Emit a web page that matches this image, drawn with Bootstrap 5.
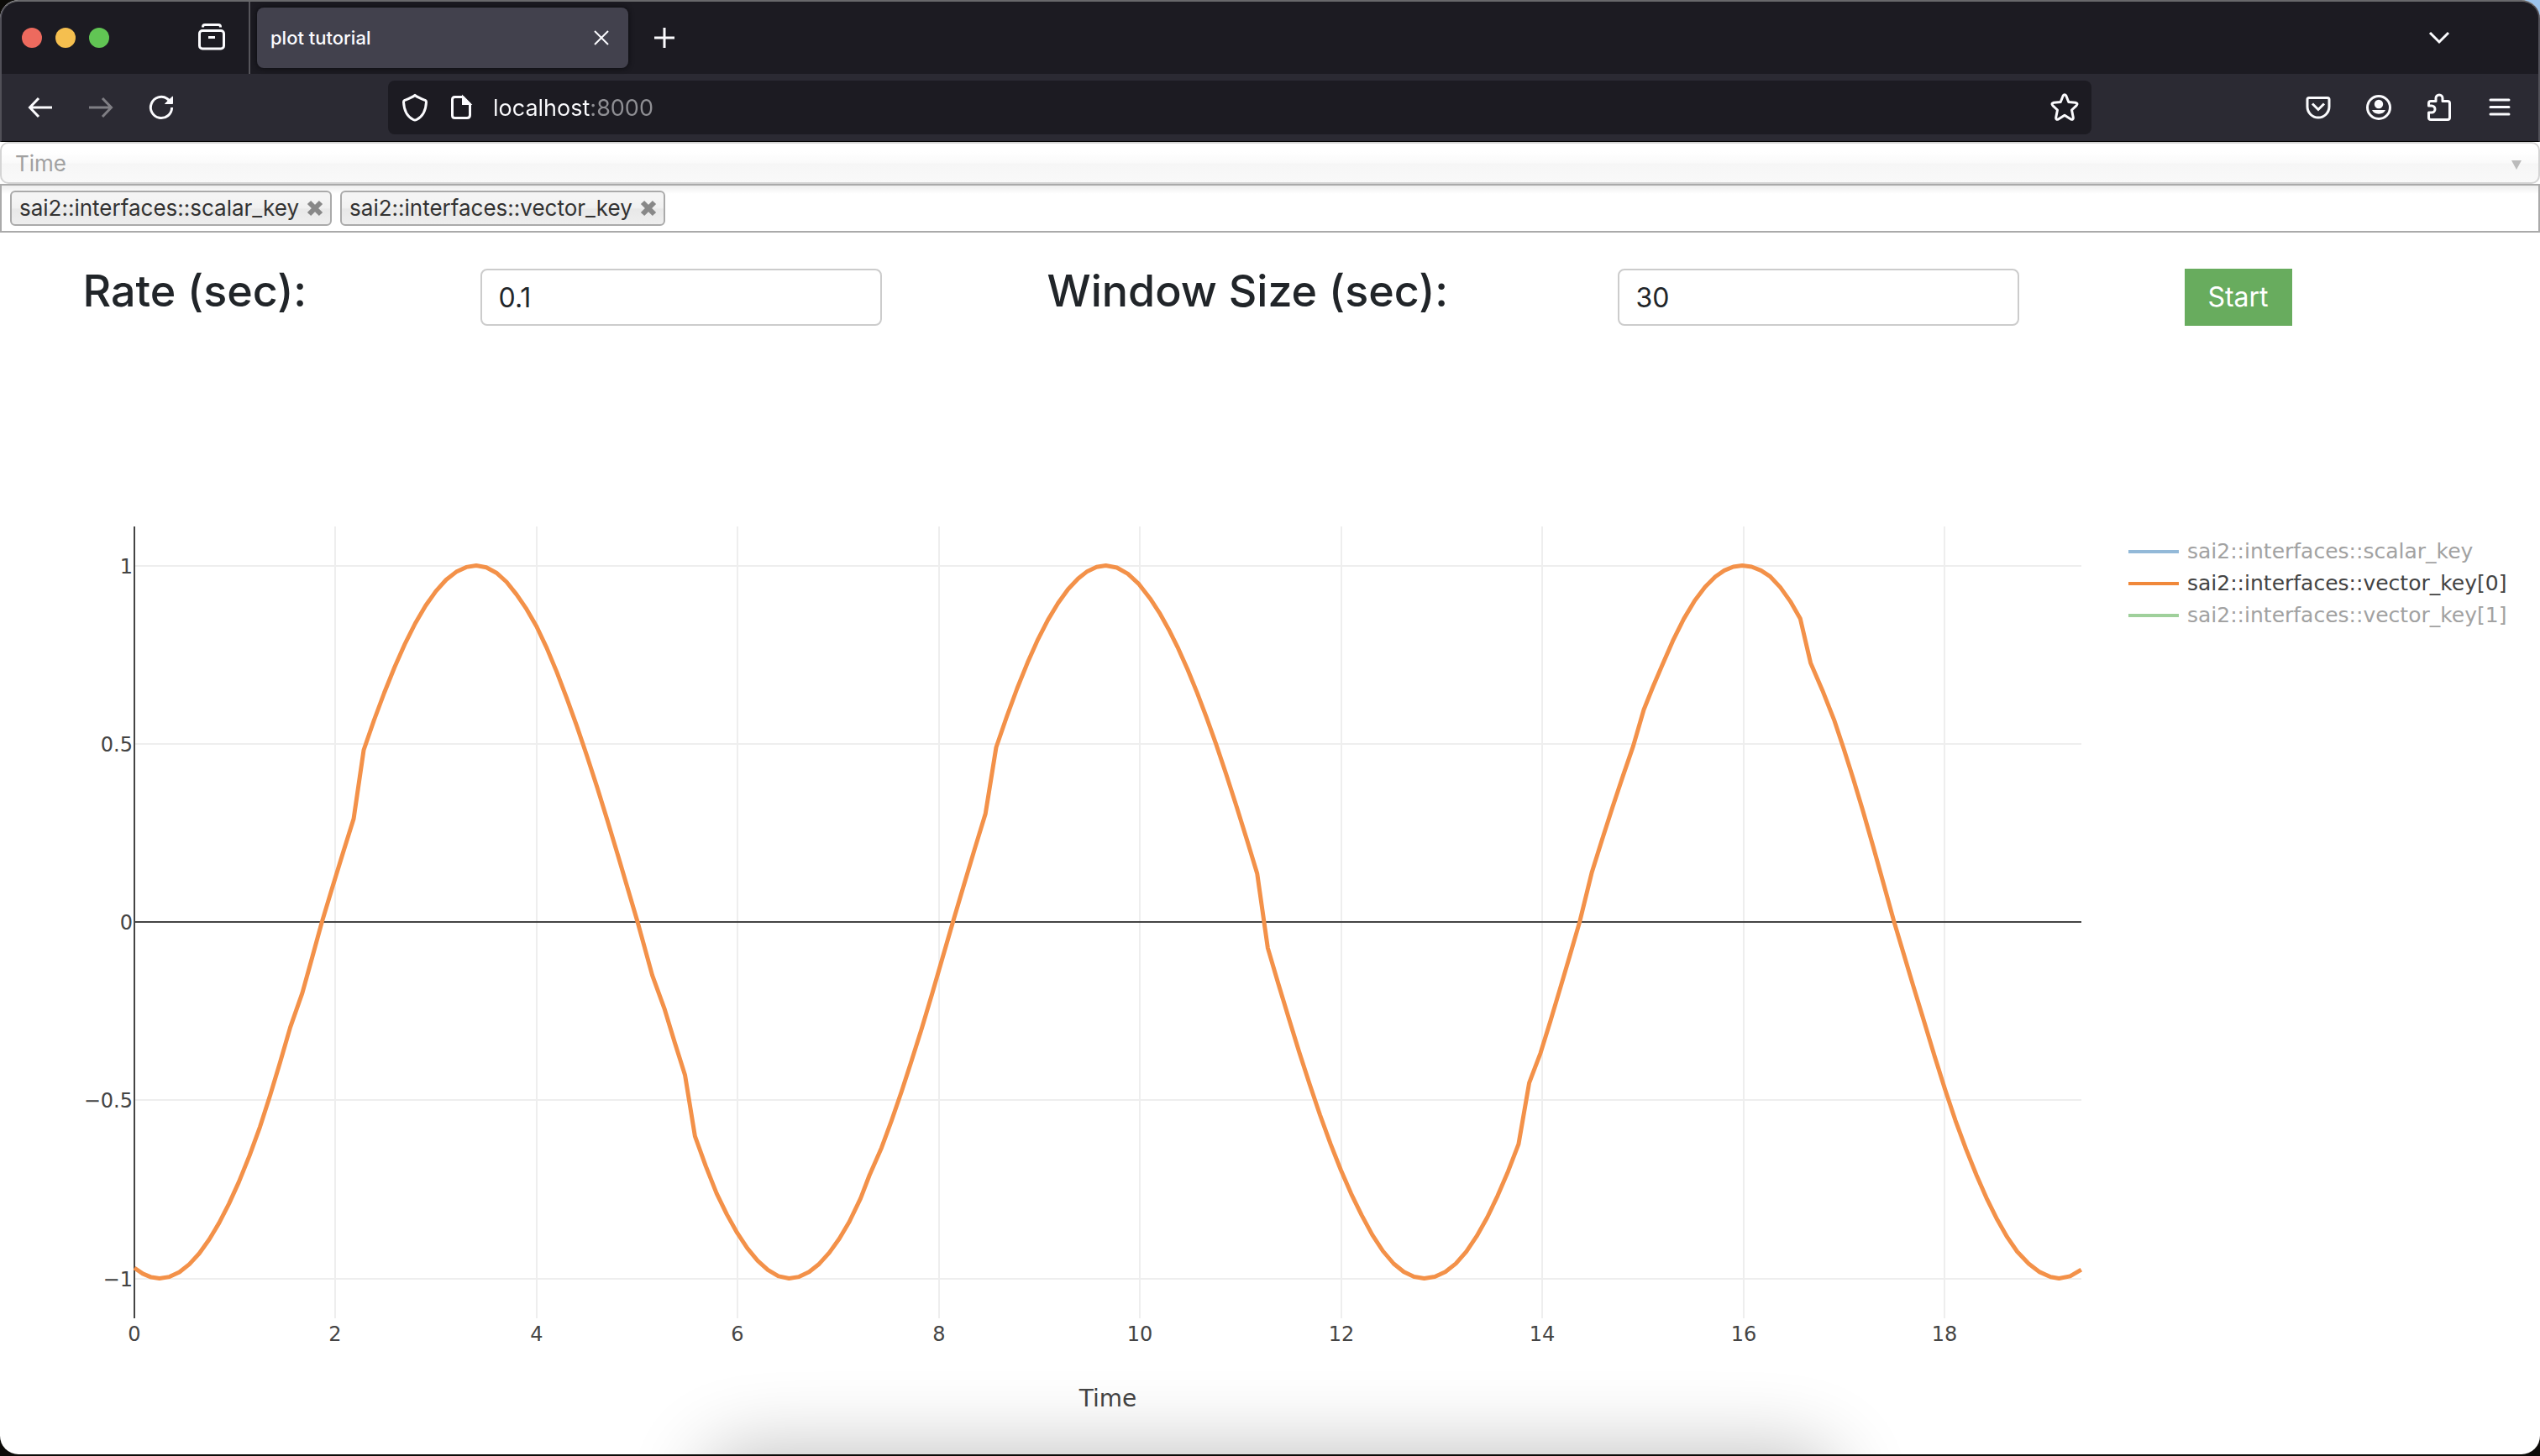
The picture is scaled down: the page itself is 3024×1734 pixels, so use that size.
<!DOCTYPE html>
<html lang="en">
<head>
<meta charset="utf-8">
<meta name="viewport" content="width=device-width, initial-scale=1">
<title>plot tutorial</title>
<link rel="stylesheet" href="https://cdn.jsdelivr.net/npm/bootstrap@5.3.0/dist/css/bootstrap.min.css">
<style>
  body { background: #0c0b08; font-family: Inter, "Liberation Sans", sans-serif; color: #212529; }
  .desk { background: radial-gradient(circle at 100% 0, #9cc4ee 0 18px, transparent 19px); padding-bottom: 2px; }
  .app-window { border-radius: 22px; background: #fff; }
  .chrome { border: 2px solid #515058; border-top-color: #68686b; border-bottom: 1px solid #000; border-radius: 22px 22px 0 0; background: #2b2a33; color: #fbfbfe; }
  .chrome svg, .chip svg { display: block; fill: none; stroke: currentColor; stroke-width: 3; }
  .tab-strip { height: 86px; padding-right: 104px; background: #1c1b22; border-radius: 20px 20px 0 0; }
  .light { width: 24px; height: 24px; border-radius: 50%; margin-right: 16px; }
  .light-close { background: #ed6a5e; margin-left: 24px; }
  .light-min { background: #f5bf4f; }
  .light-max { background: #61c554; }
  .tool { border: 0; padding: 0; background: none; color: inherit; }
  .tool:disabled { color: #7f7e84; }
  .recent { margin-left: 88px; margin-right: 26px; }
  .split { width: 2px; background: #56555b; margin-right: 8px; }
  .page-tab { width: 442px; height: 72px; padding: 0 22px 0 16px; border-radius: 8px; background: #42414d; font-size: 22px; font-weight: 500; box-shadow: 0 0 6px #0a0a0e; }
  .page-tab svg { stroke-width: 2; }
  .address-bar { height: 80px; padding-left: 30px; padding-right: 30px; }
  .nav-tools { width: 430px; gap: 40px; }
  .url-field { height: 64px; width: 2028px; border-radius: 8px; background: #1c1b22; padding: 0 14px 0 15px; }
  .url-field input { border: 0; outline: 0; padding: 2px 0 0; margin-left: 24px; font-size: 27px; color: #fbfbfe; background: linear-gradient(90deg, #fbfbfe 115px, #8f8f94 115px); -webkit-background-clip: text; background-clip: text; -webkit-text-fill-color: transparent; }
  .side-tools { gap: 40px; }
  .axis-select { height: 50px; padding: 2px 16px 0; border: 2px solid #d4d4d4; border-radius: 10px; font-size: 26px; line-height: 40px; color: #a1a1a1; opacity: 1; appearance: none; background: linear-gradient(#fff 20%, #fafafa 50%, #f6f6f6 52%, #f9f9f9 100%); }
  .axis-arrow { position: absolute; right: 22px; top: 22px; border: 6px solid transparent; border-top: 11px solid #bbb; border-bottom: 0; }
  .key-box { height: 58px; padding: 6px 10px; gap: 10px; border: 2px solid #aaa; background: linear-gradient(#eee, #fff 10px); }
  .chip { height: 42px; padding: 0 8px 0 9px; gap: 9px; border: 2px solid #aaa; border-radius: 6px; font-size: 26px; line-height: 38px; color: #333; background: linear-gradient(#f4f4f4 20%, #f0f0f0 50%, #e8e8e8 52%, #eee); }
  .chip .tool { color: #888; }
  .chip svg { stroke-width: 6; }
  .plot-form { padding-top: 36px; }
  .plot-form label { font-size: 52px; font-weight: 500; line-height: 67px; margin-bottom: 8px; white-space: nowrap; }
  .label-rate { width: 276px; }
  .label-size { width: 482px; }
  .plot-form input { width: 478px; height: 68px; padding: 2px 20px; border: 2px solid #ccc; border-radius: 8px; font-size: 32px; color: #212529; }
  .plot-form .btn { height: 68px; width: 128px; padding: 0; border: 0; border-radius: 0; font-size: 32px; background: #68ac5e; color: #fff; }
  .plot { margin-top: 212px; font-family: "DejaVu Sans", Verdana, sans-serif; color: #444; }
  .plot-canvas { min-width: 0; }
  .plot-canvas text { font-size: 24px; fill: #444; }
  .plot-canvas .axis-name { font-size: 28px; }
  .legend-keys { width: 490px; padding-top: 38px; font-size: 25px; line-height: 38px; }
  .legend-keys li { gap: 10px; white-space: nowrap; }
  .swatch { width: 60px; height: 4px; background: #f0883a; }
  .off { color: #a2a2a2; }
  .swatch-scalar { background: #93b9d8; }
  .swatch-second { background: #9fd09b; }
  .dock-shade { position: absolute; left: 0; right: 0; bottom: 0; height: 120px; overflow: hidden; pointer-events: none; border-radius: 0 0 22px 22px; }
  .dock-shade span { position: absolute; left: 28%; right: 28%; top: 122px; height: 200px; border-radius: 40px; box-shadow: 0 0 90px 10px rgba(0,0,0,.24); }
</style>
<script src="https://cdn.jsdelivr.net/npm/bootstrap@5.3.0/dist/js/bootstrap.bundle.min.js"></script>
</head>
<body>
<div class="desk min-vh-100 d-flex flex-column">
<div class="app-window position-relative flex-grow-1">
  <header class="chrome">
    <div class="tab-strip d-flex align-items-center">
      <span class="light light-close"></span><span class="light light-min"></span><span class="light light-max"></span>
      <button class="tool recent" aria-label="Recent browsing"><svg width="36" height="36" viewBox="0 0 36 36"><rect x="3.500" y="9.500" width="29" height="21.500" rx="3.500"/><path d="M7.500 5.500V5Q7.500 2.500 10 2.500H26Q28.500 2.500 28.500 5V5.500M14 17.500H22"/></svg></button>
      <span class="split align-self-stretch"></span>
      <div class="page-tab d-flex align-items-center justify-content-between">
        <span>plot tutorial</span>
        <button class="tool" aria-label="Close tab"><svg width="20" height="20" viewBox="0 0 20 20"><path d="M2 2 18 18M18 2 2 18"/></svg></button>
      </div>
      <button class="tool ms-4 ps-1" aria-label="New tab"><svg width="30" height="30" viewBox="0 0 30 30"><path d="M15 3V27M3 15H27"/></svg></button>
      <button class="tool ms-auto" aria-label="List all tabs"><svg width="28" height="20" viewBox="0 0 28 20"><path d="M3 4 14 15 25 4"/></svg></button>
    </div>
    <div class="address-bar d-flex align-items-center">
      <div class="nav-tools d-flex align-items-center flex-shrink-0">
        <button class="tool" aria-label="Back"><svg width="32" height="32" viewBox="0 0 32 32"><path d="M30 16H4M14 5 3.500 16 14 27"/></svg></button>
        <button class="tool" aria-label="Forward" disabled><svg width="32" height="32" viewBox="0 0 32 32"><path d="M2 16H28M18 5 28.500 16 18 27"/></svg></button>
        <button class="tool" aria-label="Reload"><svg width="32" height="32" viewBox="0 0 32 32"><path d="M28.600 16A12.600 12.600 0 1 1 23 5.500L26 8"/><path d="M29.500 3V11.500H20.500Z" fill="currentColor" stroke-width="1"/></svg></button>
      </div>
      <div class="url-field d-flex align-items-center">
        <svg width="34" height="36" viewBox="0 0 34 36"><path d="M17 3.500C13 6.500 8.500 8 4.500 9.500Q3.500 10 3.500 11.500C4 22 8 29 15 32.500Q17 33.500 19 32.500C26 29 30 22 30.500 11.500Q30.500 10 29.500 9.500C25.500 8 21 6.500 17 3.500Z"/></svg>
        <svg class="ms-4" width="28" height="32" viewBox="0 0 28 32"><path d="M6.500 3.500H16L24.500 12V25Q24.500 28.500 21 28.500H6.500Q3.500 28.500 3.500 25.500V6.500Q3.500 3.500 6.500 3.500Z"/><path d="M16 3V12H25Z" fill="currentColor" stroke-width="2"/></svg>
        <input class="flex-grow-1" type="text" aria-label="Address" value="localhost:8000">
        <button class="tool" aria-label="Bookmark this page"><svg width="36" height="36" viewBox="0 0 36 36"><path stroke-linejoin="round" d="M16.200 4Q18 1.500 19.800 4L22.800 11.500L31 12.200Q34.500 13 32 15.800L26.500 21L28.300 30Q28.500 33 25.500 32L18 27.200L10.500 32Q7.500 33 7.700 30L9.500 21L4 15.800Q1.500 13 5 12.200L13.200 11.500Z"/></svg></button>
      </div>
      <div class="side-tools d-flex align-items-center ms-auto flex-shrink-0">
        <button class="tool" aria-label="Save to Pocket"><svg width="32" height="32" viewBox="0 0 32 32"><path d="M5 4.500H27Q29 4.500 29 6.500V15A13 13 0 0 1 3 15V6.500Q3 4.500 5 4.500ZM9 11.500 16 18.500 23 11.500"/></svg></button>
        <button class="tool" aria-label="Account"><svg width="32" height="32" viewBox="0 0 32 32"><circle cx="16" cy="16" r="13.500"/><circle cx="16" cy="12" r="5.200" fill="currentColor" stroke="none"/><path d="M8 19H24A8.500 7 0 0 1 8 19Z" fill="currentColor" stroke="none"/></svg></button>
        <button class="tool" aria-label="Extensions"><svg width="32" height="36" viewBox="0 0 32 36"><path stroke-linejoin="round" d="M3.500 14V13Q3.500 10.500 6 10.500H12V7A4 4 0 0 1 20 7V10.500H26Q28.500 10.500 28.500 13V30Q28.500 32.500 26 32.500H6Q3.500 32.500 3.500 30V24H7A4 4 0 0 0 7 16H3.500Z"/></svg></button>
        <button class="tool" aria-label="Application menu"><svg width="32" height="32" viewBox="0 0 32 32"><path stroke-linecap="round" d="M5 7H27M5 15.500H27M5 24H27"/></svg></button>
      </div>
    </div>
  </header>
  <main>
    <div class="position-relative">
      <select class="axis-select w-100 d-block" aria-label="X axis" disabled><option>Time</option></select>
      <span class="axis-arrow"></span>
    </div>
    <ul class="key-box list-unstyled d-flex mb-0">
      <li class="chip d-flex align-items-center">sai2::interfaces::scalar_key <button class="tool" aria-label="Remove scalar_key"><svg width="20" height="20" viewBox="0 0 20 20"><path d="M3 3 17 17M17 3 3 17"/></svg></button></li>
      <li class="chip d-flex align-items-center">sai2::interfaces::vector_key <button class="tool" aria-label="Remove vector_key"><svg width="20" height="20" viewBox="0 0 20 20"><path d="M3 3 17 17M17 3 3 17"/></svg></button></li>
    </ul>
    <form class="plot-form d-flex justify-content-around align-items-end" onsubmit="return false">
      <label class="label-rate" for="rate">Rate (sec):</label>
      <input id="rate" type="text" value="0.1">
      <label class="label-size" for="size">Window Size (sec):</label>
      <input id="size" type="text" value="30">
      <button class="btn" type="submit">Start</button>
      <output for="rate size"></output>
    </form>
    <div class="plot d-flex align-items-start">
      <svg class="plot-canvas flex-grow-1 d-block" viewBox="0 0 2534 1132" role="img" aria-label="vector_key[0] against time">
        <g id="grid" stroke="#eee" stroke-width="2"></g>
        <path d="M160 498H2478M160 27V970" stroke="#444" stroke-width="2"/>
        <path id="trace" fill="none" stroke="#f39149" stroke-width="5" stroke-linejoin="round"/>
        <g id="xticks" text-anchor="middle"></g>
        <g id="yticks" text-anchor="end"></g>
        <text class="axis-name" x="1319" y="1075" text-anchor="middle">Time</text>
      </svg>
      <ul class="legend-keys list-unstyled mb-0 flex-shrink-0">
        <li class="d-flex align-items-center off"><span class="swatch swatch-scalar"></span>sai2::interfaces::scalar_key</li>
        <li class="d-flex align-items-center"><span class="swatch"></span>sai2::interfaces::vector_key[0]</li>
        <li class="d-flex align-items-center off"><span class="swatch swatch-second"></span>sai2::interfaces::vector_key[1]</li>
      </ul>
    </div>
  </main>
  <div class="dock-shade"><span></span></div>
</div>
</div>
<script>
  // Time / phase samples of the signal; the value drawn is -cos(phase).
  const samples = [[0,-.243],[.25,0],[1.04,.754],[1.25,.959],[1.55,1.271],[1.67,1.37],[1.865,1.571],[2.18,1.864],[2.28,2.074],[2.69,2.465],[3.1,2.858],[3.4,3.142],[3.8,3.547],[4,3.736],[4.3,4.034],[5.003,4.712],[5.15,4.863],[5.27,4.957],[5.475,5.156],[5.575,5.357],[5.79,5.578],[6.3,6.063],[6.51,6.283],[6.91,6.665],[7.11,6.855],[7.222,6.967],[7.31,7.064],[7.43,7.168],[7.83,7.551],[8.14,7.854],[8.463,8.162],[8.57,8.366],[8.986,8.77],[9.385,9.154],[9.66,9.425],[10.1,9.858],[10.754,10.471],[11.165,10.859],[11.271,11.069],[11.895,11.668],[12.204,11.961],[12.523,12.278],[12.827,12.566],[13.141,12.855],[13.765,13.464],[13.871,13.669],[13.983,13.76],[14.372,14.137],[14.495,14.278],[14.905,14.653],[15.01,14.775],[15.19,14.938],[15.517,15.261],[15.722,15.458],[15.99,15.708],[16.268,15.958],[16.566,16.261],[16.669,16.465],[16.903,16.676],[17.188,16.96],[17.5,17.279],[17.777,17.542],[17.904,17.667],[18.109,17.869],[18.424,18.17],[18.723,18.459],[18.838,18.561],[19.055,18.76],[19.14,18.85],[19.36,19.071]];
  const px = t => 160 + t * 119.72, py = v => 498 - v * 424.5;
  const pts = [];
  samples.forEach(([t, p], i) => {
    if (i) {
      const [t0, p0] = samples[i - 1], n = Math.max(1, Math.round((t - t0) / .1));
      for (let k = 1; k < n; k++) pts.push([t0 + (t - t0) * k / n, p0 + (p - p0) * k / n]);
    }
    pts.push([t, p]);
  });
  document.getElementById('trace').setAttribute('d', 'M' + pts.map(([t, p]) => px(t).toFixed(1) + ' ' + py(-Math.cos(p)).toFixed(1)).join('L'));
  let grid = '', xt = '', yt = '';
  for (let t = 0; t <= 18; t += 2) {
    const x = Math.round(px(t));
    if (t) grid += `<path d="M${x} 27V970"/>`;
    xt += `<text x="${x}" y="997">${t}</text>`;
  }
  for (const v of [1, .5, 0, -.5, -1]) {
    const y = Math.round(py(v));
    if (v) grid += `<path d="M160 ${y}H2478"/>`;
    yt += `<text x="158" y="${y + 9}">${String(v).replace('-', '\u2212')}</text>`;
  }
  document.getElementById('grid').innerHTML = grid;
  document.getElementById('xticks').innerHTML = xt;
  document.getElementById('yticks').innerHTML = yt;
</script>
</body>
</html>
